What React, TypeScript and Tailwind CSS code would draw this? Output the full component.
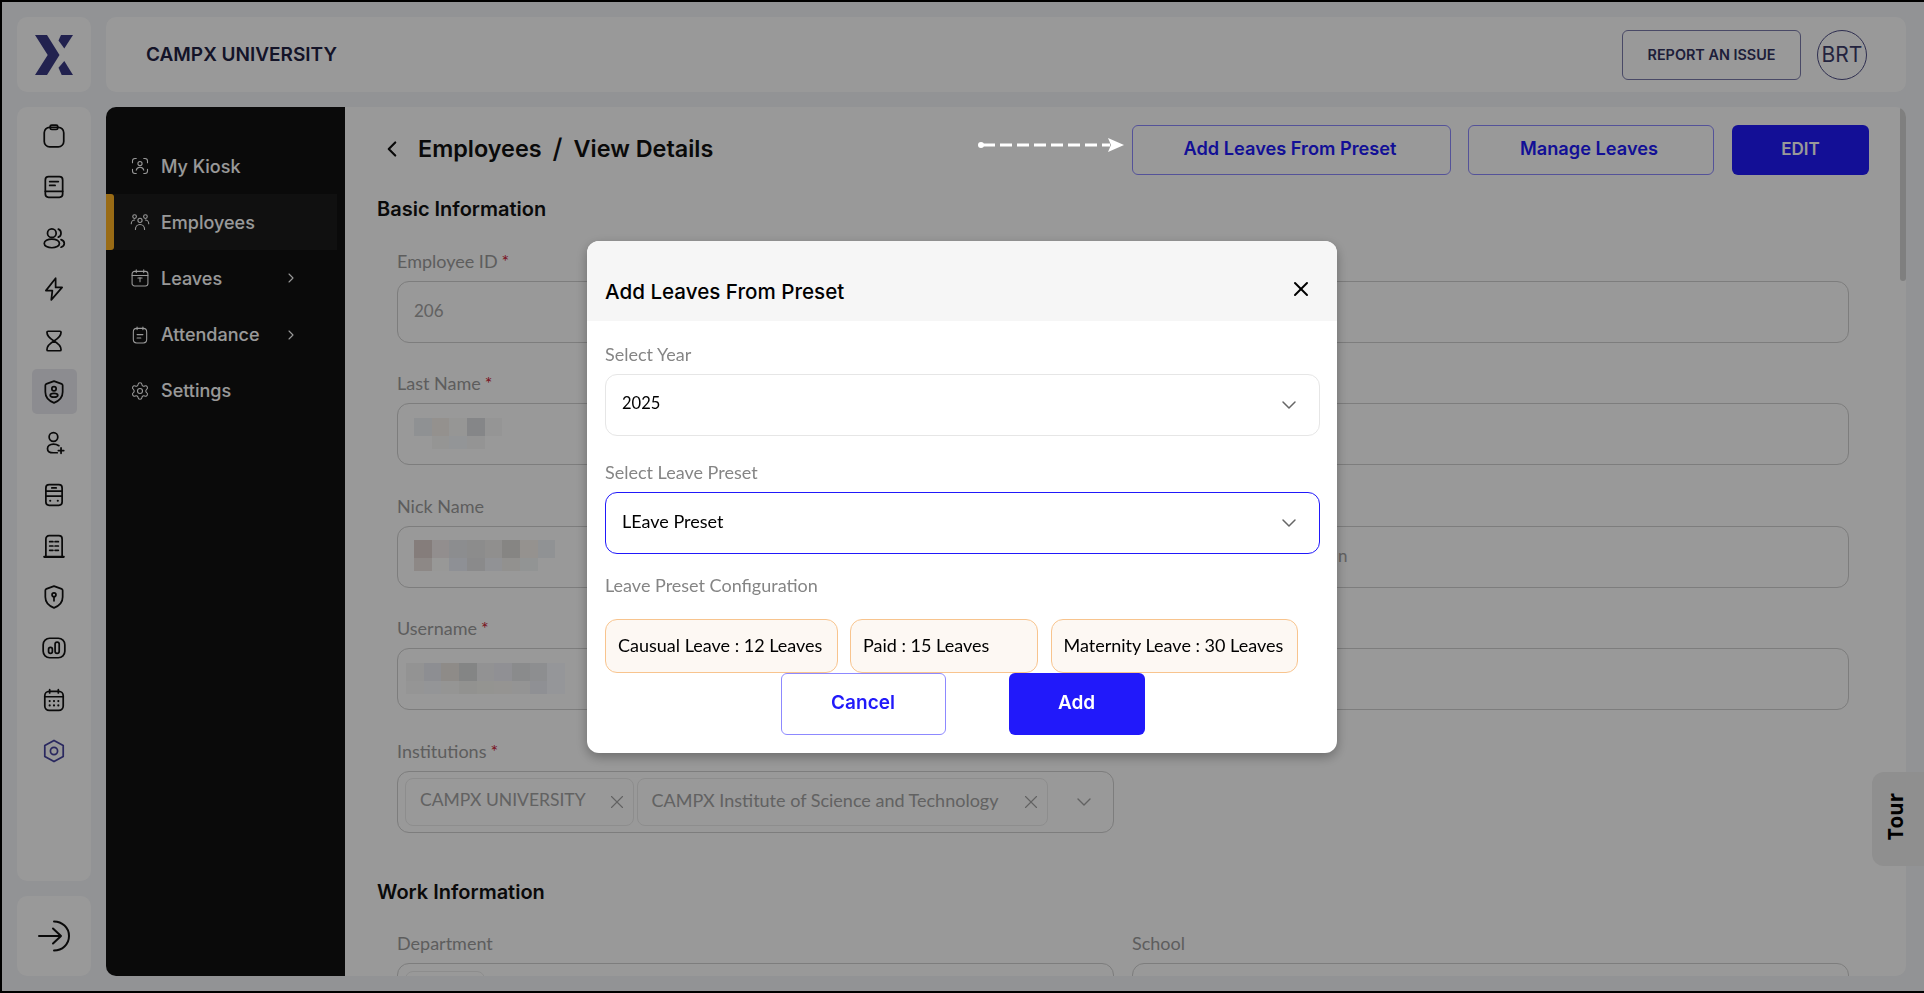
import React from "react";
import { ChevronDown, ChevronLeft, ChevronRight, Settings, X } from "lucide-react";

const lato = "font-[family-name:Lato,sans-serif]";

// Mosaic cells are listed as they look under the dim layer; the helper undoes the dimming.
const undim = (hex: string) => {
  const n = parseInt(hex.slice(1), 16);
  const f = (v: number) => Math.min(255, Math.round(v / 0.6));
  return `rgb(${f((n >> 16) & 255)},${f((n >> 8) & 255)},${f(n & 255)})`;
};

function Mosaic({ cols, top, bottom }: { cols: number[]; top: string[]; bottom: string[] }) {
  return (
    <div className="flex flex-col">
      {[top, bottom].map((row, r) => (
        <div key={r} className={r === 0 ? "flex h-[18px]" : "flex h-[13px]"}>
          {row.map((c, i) => (
            <div key={i} style={{ width: cols[i], backgroundColor: undim(c) }} />
          ))}
        </div>
      ))}
    </div>
  );
}

function RailIcon({ children, active, color = "#111" }: { children: React.ReactNode; active?: boolean; color?: string }) {
  return (
    <div className={active ? "flex h-[45px] w-[45px] items-center justify-center rounded-[5px] bg-[#eaeaf0]" : "flex h-[45px] w-[45px] items-center justify-center"}>
      <svg width="26" height="26" viewBox="0 0 24 24" fill="none" stroke={color} strokeWidth="1.6" strokeLinecap="round" strokeLinejoin="round">
        {children}
      </svg>
    </div>
  );
}

function SideIcon({ children }: { children: React.ReactNode }) {
  return (
    <svg width="20" height="20" viewBox="0 0 24 24" fill="none" stroke="#fff" strokeWidth="1.3" strokeLinecap="round" strokeLinejoin="round">
      {children}
    </svg>
  );
}

function SideItem({ icon, label, active, more }: { icon: React.ReactNode; label: string; active?: boolean; more?: boolean }) {
  return (
    <div className="flex h-[56.2px] items-center">
      <div className={active ? "h-full w-[8px] rounded-r-[3px] bg-[#ffb224]" : "h-full w-[8px]"} />
      <div className={active ? "flex h-full w-[223px] items-center bg-[#1c1c1c] pl-[16px]" : "flex h-full w-[223px] items-center pl-[16px]"}>
        <div className="flex w-[31px] items-center">{icon}</div>
        <span className={"text-[18px] font-medium text-white " + (more ? "w-[122px]" : "")}>{label}</span>
        {more && <ChevronRight size={16} color="#fff" strokeWidth={1.6} />}
      </div>
    </div>
  );
}

function Label({ text, required }: { text: string; required?: boolean }) {
  return (
    <div className={"mb-[7px] h-[24px] text-[18px] leading-[22px] text-[#9c9c9c] " + lato}>
      {text}
      {required && <span className="ml-[4px] text-[#cc1a33]">*</span>}
    </div>
  );
}

function Field({ label, required, children }: { label?: string; required?: boolean; children?: React.ReactNode }) {
  return (
    <div>
      <Label text={label ?? "\u00a0"} required={required} />
      <div className="flex h-[62px] items-center rounded-[12px] border border-[#d0d0d0] pb-[2px] pl-[16px] text-[17px] text-[#a3a3a3]">
        {children}
      </div>
    </div>
  );
}

function Chip({ text, width, size }: { text: string; width: string; size: string }) {
  return (
    <div className={"flex h-[48px] items-center justify-between rounded-[8px] border border-[#ececec] pl-[14px] pr-[5px] text-[#a3a3a3] " + size + " " + width + " " + lato}>
      <span className="pb-[2px]">{text}</span>
      <X size={22} color="#a3a3a3" strokeWidth={1.2} />
    </div>
  );
}

function ModalLabel({ text }: { text: string }) {
  return <div className={"h-[22px] text-[18px] leading-[20px] text-[#858585] " + lato}>{text}</div>;
}

function Tag({ text, width }: { text: string; width: string }) {
  return (
    <div className={"flex h-[54px] items-center rounded-[12px] border border-[#f8c48e] bg-[#fdf8f3] pl-[12px] text-[18px] text-black " + width + " " + lato}>
      {text}
    </div>
  );
}

export default function App() {
  return (
    <div className="flex h-[993px] w-[1924px] gap-[15px] overflow-hidden border-y-2 border-l-2 border-black bg-[#f3f5f8] pb-[13px] pl-[15px] pr-[18px] pt-[15px] font-[family-name:Inter,sans-serif]">
      <div className="flex w-[74px] flex-col">
        <div className="flex h-[75px] items-center justify-center rounded-[10px] bg-white">
          <svg width="38" height="40" viewBox="35 35 38 40">
            <g fill="#393984">
              <polygon points="35,35 47,35 59.5,55 47,75 35,75 47.7,55" />
              <polygon points="61,35 73,35 64.3,48.5 58.500,40.500" />
              <polygon points="58.500,67.700 64.3,61 73,75 61.7,75" />
            </g>
          </svg>
        </div>
        <div className="mt-[15px] flex h-[774px] flex-col items-center gap-[6.3px] rounded-[10px] bg-white pt-[6px]">
          <RailIcon><rect x="3" y="4" width="18" height="18" rx="5" /><rect x="8.5" y="2" width="7" height="4" rx="1.5" /></RailIcon>
          <RailIcon><rect x="4" y="2.5" width="16" height="19" rx="3" /><path d="M4 16h16M8 7h8M8 10.5h5" /></RailIcon>
          <RailIcon><circle cx="10" cy="7.5" r="4" /><ellipse cx="10" cy="17" rx="7" ry="4" /><path d="M16 3.8a4 4 0 0 1 0 7.4M18.5 13.5c2.2.7 3 2 3 3.5s-.8 2.800-3 3.500" /></RailIcon>
          <RailIcon><path d="M13.500 2 4.500 13.500h6L9.500 22l10-11.500h-6z" /></RailIcon>
          <RailIcon><path d="M6.500 3h11c.5 0 1 .5 1 1 0 3.500-3 6-6.500 8-3.500-2-6.500-4.500-6.500-8 0-.5.500-1 1-1zM12 12c3.500 2 6.500 4.500 6.500 8 0 .5-.5 1-1 1h-11c-.5 0-1-.5-1-1 0-3.500 3-6 6.500-8z" /></RailIcon>
          <RailIcon active><path d="M12 2 19 4.500c.6.2 1 .8 1 1.500v6c0 5-4 8.500-8 10-4-1.500-8-5-8-10V6c0-.7.400-1.300 1-1.500z" /><circle cx="12" cy="9" r="2" /><ellipse cx="12" cy="15" rx="3.500" ry="1.800" /></RailIcon>
          <RailIcon><circle cx="11.500" cy="6.500" r="4" /><path d="M16.500 14.500c-1.200-.8-3-1.500-5-1.500C8 13 6 15 6 17.200S8 21 11.500 21H15M18.500 16.500v5M16 19h5" /></RailIcon>
          <RailIcon><rect x="4.500" y="2.500" width="15" height="19" rx="3" /><path d="M4.500 8.500h15M4.500 13h15M10 5.500h4" /><path d="M8.500 17.300h.01M15.500 17.300h.01" strokeWidth="2" /></RailIcon>
          <RailIcon><path d="M4.500 21.500V5.500a3 3 0 0 1 3-3h9a3 3 0 0 1 3 3v16" /><path d="M3 22h18" strokeWidth="2" /><path d="M8 8h3M13 8h3M8 12h3M13 12h3M8 16h3M13 16h3" /></RailIcon>
          <RailIcon><path d="M12 2 19 4.500c.6.2 1 .8 1 1.500v6c0 5-4 8.500-8 10-4-1.500-8-5-8-10V6c0-.7.400-1.300 1-1.500z" /><circle cx="12" cy="10" r="1.800" /><path d="M12 12v3.500" /></RailIcon>
          <RailIcon><rect x="2" y="3" width="20" height="18" rx="6" /><rect x="7" y="11.500" width="3.500" height="5.500" rx="1.700" /><rect x="13" y="6.500" width="3.800" height="10.500" rx="1.900" /></RailIcon>
          <RailIcon><rect x="3.500" y="4" width="17" height="17.500" rx="4" /><path d="M3.500 9h17M8 2.500v3M16 2.500v3" /><path d="M8 13h.01M12 13h.01M16 13h.01M8 17h.01M12 17h.01M16 17h.01" strokeWidth="2" /></RailIcon>
          <RailIcon color="#46449f"><path d="M12 2.200 20.500 7v10L12 21.800 3.500 17V7z" /><circle cx="12" cy="12" r="3.300" /></RailIcon>
        </div>
        <div className="mt-[15px] flex h-[80px] items-center justify-center rounded-[10px] bg-white">
          <svg width="32" height="32" viewBox="0 0 32 32" fill="none" stroke="#111" strokeWidth="2" strokeLinecap="round" strokeLinejoin="round">
            <path d="M1 16h22M15 8.500 23 16l-8 7.500" />
            <path d="M16 1.500c8 0 15 6 15 14.500s-7 14.500-15 14.500" />
          </svg>
        </div>
      </div>

      <div className="flex w-[1800px] flex-col gap-[15px]">
        <div className="flex h-[75px] items-center rounded-[10px] bg-white pl-[40px] pr-[39px]">
          <span className="pt-[2px] text-[19px] font-semibold text-[#222244]">CAMPX UNIVERSITY</span>
          <div className="ml-auto flex h-[50px] w-[179px] items-center justify-center rounded-[6px] border border-[#7b7baa] text-[14.4px] font-semibold text-[#32325f]">
            REPORT AN ISSUE
          </div>
          <div className="ml-[16px] flex h-[50px] w-[50px] items-center justify-center rounded-full border border-[#4d4d85] text-[21px] text-[#3c3c69]">
            BRT
          </div>
        </div>

        <div className="flex h-[869px]">
          <div className="w-[239px] shrink-0 rounded-l-[10px] bg-[#121212] pt-[31px]">
            <SideItem label="My Kiosk" icon={<SideIcon><path d="M3 8V6a3 3 0 0 1 3-3h1.500M16.500 3H18a3 3 0 0 1 3 3v2M3 16v2a3 3 0 0 0 3 3h1.500M16.500 21H18a3 3 0 0 0 3-3v-2" /><circle cx="12" cy="9" r="2.500" /><path d="M7.500 17c.6-2.400 2.400-3.500 4.500-3.500s3.900 1.100 4.500 3.500" /></SideIcon>} />
            <SideItem label="Employees" active icon={<SideIcon><circle cx="12" cy="10" r="2.500" /><circle cx="5.500" cy="5.500" r="2.200" /><circle cx="18.500" cy="5.500" r="2.200" /><path d="M6.500 21c0-3.500 2.500-6 5.500-6s5.500 2.500 5.500 6M1.500 14c0-2.500 2-4.500 4-4.500M22.500 14c0-2.500-2-4.500-4-4.500" /></SideIcon>} />
            <SideItem label="Leaves" more icon={<SideIcon><rect x="2.500" y="4" width="19" height="17.500" rx="3" /><path d="M2.500 9h19M7.500 2v3.500M16.500 2v3.500M12 11.500v5M9.500 12h5" /></SideIcon>} />
            <SideItem label="Attendance" more icon={<SideIcon><rect x="4" y="4" width="16" height="17.500" rx="4" /><path d="M8.500 2.500v3M15.500 2.500v3M8.500 11.500h7M8.500 15.500h4.500" /></SideIcon>} />
            <SideItem label="Settings" icon={<Settings size={20} color="#fff" strokeWidth={1.3} />} />
          </div>

          <div className="relative min-w-0 flex-1 overflow-hidden rounded-r-[10px] bg-white pl-[32px]">
            <div className="absolute right-0 top-0 h-[174px] w-[6px] rounded-full bg-[#d4d4d4]" />
            <div className="mt-[18px] flex h-[50px] items-center justify-between pr-[37px]">
              <div className="mb-[2px] flex items-center">
                <ChevronLeft size={26} color="#111" strokeWidth={2} className="ml-[2px]" />
                <span className="ml-[13px] text-[23.4px] font-semibold text-[#111]">Employees</span>
                <span className="ml-[11px] text-[27px] font-medium text-[#111]">/</span>
                <span className="ml-[11px] text-[23.400px] font-semibold text-[#111]">View Details</span>
              </div>
              <div className="flex items-center">
                <div className="flex h-[50px] w-[319px] items-center justify-center rounded-[6px] border border-[#8d89ff] pb-[2px] pr-[3px] text-[18.2px] font-semibold text-[#2119fa]">
                  Add Leaves From Preset
                </div>
                <div className="ml-[17px] flex h-[50px] w-[246px] items-center justify-center rounded-[6px] border border-[#8d89ff] pb-[2px] pr-[4px] text-[18.2px] font-semibold text-[#2119fa]">
                  Manage Leaves
                </div>
                <div className="ml-[18px] flex h-[50px] w-[137px] items-center justify-center rounded-[6px] bg-[#2119fa] text-[17px] font-semibold text-white">
                  EDIT
                </div>
              </div>
            </div>

            <h2 className="mt-[21px] h-[27px] text-[20px] font-semibold leading-[27px] text-[#111]">Basic Information</h2>
            <div className="mt-[27px] grid w-[1472px] grid-cols-2 gap-x-[18px] gap-y-[29.4px] pl-[20px]">
              <Field label="Employee ID" required><span className={lato}>206</span></Field>
              <Field />
              <Field label="Last Name" required>
                <Mosaic cols={[18, 17, 18, 18, 17]} top={["#8f9193", "#94918e", "#969695", "#858688", "#959595"]} bottom={["#999999", "#959594", "#939597", "#949494", "#999999"]} />
              </Field>
              <Field />
              <Field label="Nick Name">
                <Mosaic cols={[18, 17, 18, 18, 17, 18, 18, 17]} top={["#857d7b", "#928e8e", "#8c8d8f", "#8c8c8c", "#908f8e", "#868583", "#95928f", "#909294"]} bottom={["#8d8886", "#989897", "#8e9095", "#8a8a8b", "#919295", "#92918f", "#929494", "#999999"]} />
              </Field>
              <Field><span className={"pl-[189px] " + lato}>n</span></Field>
              <Field label="Username" required>
                <div className="-ml-[8px]">
                  <Mosaic cols={[18, 17, 18, 18, 17, 18, 18, 17, 18]} top={["#939393", "#8d8e92", "#8e8b88", "#848585", "#929293", "#909094", "#8a8b8c", "#8d8e90", "#95969a"]} bottom={["#959595", "#949597", "#959594", "#929290", "#949491", "#959492", "#949494", "#8f9094", "#95969a"]} />
                </div>
              </Field>
              <Field />
              <div>
                <Label text="Institutions" required />
                <div className="flex h-[62px] items-center gap-[2.5px] rounded-[12px] border border-[#d0d0d0] pl-[7px]">
                  <Chip text="CAMPX UNIVERSITY" width="w-[229px]" size="text-[17.5px]" />
                  <Chip text="CAMPX Institute of Science and Technology" width="w-[411px]" size="text-[18px]" />
                  <ChevronDown size={24} color="#a3a3a3" strokeWidth={1.4} className="ml-[22px]" />
                </div>
              </div>
            </div>

            <h2 className="mt-[46px] h-[27px] text-[20px] font-semibold leading-[27px] text-[#111]">Work Information</h2>
            <div className="mt-[26px] grid w-[1472px] grid-cols-2 gap-x-[18px] pl-[20px]">
              <div>
                <Label text="Department" />
                <div className="h-[62px] rounded-[12px] border border-[#d0d0d0] pl-[7px] pt-[7px]">
                  <div className="h-[48px] w-[80px] rounded-[8px] border border-[#ececec]" />
                </div>
              </div>
              <Field label="School" />
            </div>
          </div>
        </div>
      </div>

      <div className="absolute right-0 top-[772px] flex h-[94px] w-[52px] items-center rounded-l-[12px] bg-[#eeeeee] pb-[4px] pl-[8px]">
        <span className="rotate-180 text-[20.5px] font-bold text-black [writing-mode:vertical-rl] font-[family-name:'Open_Sans',sans-serif]">Tour</span>
      </div>

      <div className="fixed inset-0 flex items-center justify-center bg-black/40">
        <svg className="absolute left-[978px] top-[137px]" width="146" height="16" viewBox="0 0 146 16" fill="#fff">
          <circle cx="3" cy="8" r="3" />
          <line x1="5" y1="8" x2="132" y2="8" stroke="#fff" strokeWidth="3" strokeDasharray="12 5" />
          <polygon points="130,1 146,8 130,15 133,8" />
        </svg>
        <div className="h-[512px] w-[750px] rounded-[12px] bg-white shadow-[0_4px_12px_rgba(0,0,0,0.3)]">
          <div className="flex h-[80px] justify-between rounded-t-[12px] bg-[#f6f6f6] pl-[18px] pr-[24px]">
            <span className="mt-[36px] h-[30px] text-[20.6px] font-medium leading-[30px] text-black">Add Leaves From Preset</span>
            <X size={24} color="#000" strokeWidth={2} className="mt-[36px]" />
          </div>
          <div className="pl-[18px] pr-[17px] pt-[23px]">
            <ModalLabel text="Select Year" />
            <div className="mt-[8px] flex h-[62px] items-center justify-between rounded-[12px] border border-[#e6e6e6] pl-[16px] pr-[18px]">
              <span className={"pb-[2px] text-[16.5px] text-black " + lato}>2025</span>
              <ChevronDown size={24} color="#666" strokeWidth={1.5} />
            </div>
            <div className="mt-[26px]">
              <ModalLabel text="Select Leave Preset" />
            </div>
            <div className="mt-[8px] flex h-[62px] items-center justify-between rounded-[12px] border border-[#2119fa] pl-[16px] pr-[18px]">
              <span className={"pb-[2px] text-[18px] text-black " + lato}>LEave Preset</span>
              <ChevronDown size={24} color="#666" strokeWidth={1.5} />
            </div>
            <div className="mt-[21px]">
              <ModalLabel text="Leave Preset Configuration" />
            </div>
            <div className="mt-[22px] flex gap-[12.500px]">
              <Tag text="Causual Leave : 12 Leaves" width="w-[232.5px]" />
              <Tag text="Paid : 15 Leaves" width="w-[188px]" />
              <Tag text="Maternity Leave : 30 Leaves" width="w-[247px]" />
            </div>
            <div className="flex justify-center gap-[63px]">
              <div className="flex h-[62px] w-[165px] items-center justify-center rounded-[6px] border border-[#8d89ff] pb-[1px] text-[19px] font-semibold text-[#2119fa]">Cancel</div>
              <div className="flex h-[62px] w-[136px] items-center justify-center rounded-[6px] bg-[#2119fa] pb-[1px] text-[19px] font-semibold text-white">Add</div>
            </div>
          </div>
        </div>
      </div>
    </div>
  );
}
